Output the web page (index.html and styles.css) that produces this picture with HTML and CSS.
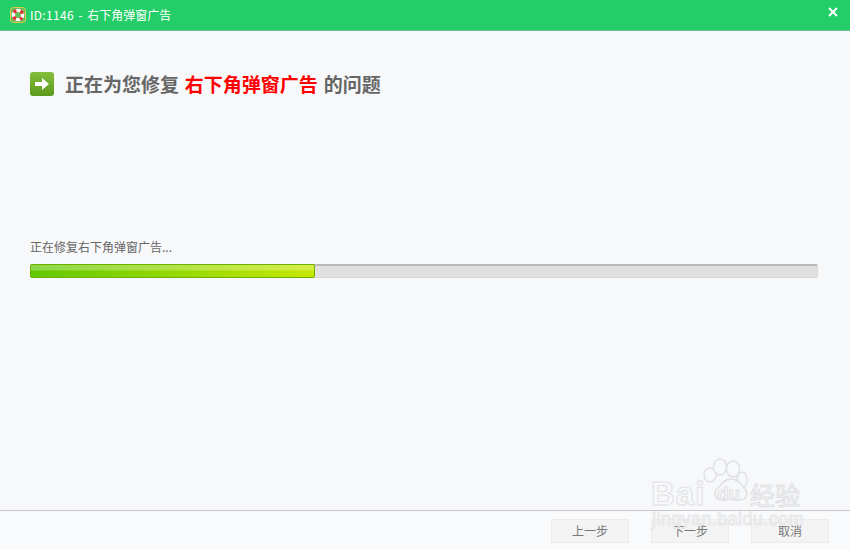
FILE: index.html
```html
<!DOCTYPE html>
<html lang="zh-CN">
<head>
  <meta charset="UTF-8">
  <title>ID:1146 - 右下角弹窗广告</title>
  <link rel="stylesheet" href="styles.css">
</head>
<body>
  <div class="title-bar">
    <svg class="app-icon" width="16" height="16" viewBox="0 0 16 16">
      <rect x="0.5" y="0.5" width="15" height="15" rx="3" fill="#5cc05c" stroke="#e6c548"/>
      <circle cx="8" cy="8" r="4.6" fill="none" stroke="#fff" stroke-width="3.4"/>
      <circle cx="8" cy="8" r="4.6" fill="none" stroke="#e0352b" stroke-width="3.4" stroke-dasharray="3.4 3.82" stroke-dashoffset="1.7" transform="rotate(45 8 8)"/>
    </svg>
    <div class="title-text"><span class="title-id">ID:1146 - </span>右下角弹窗广告</div>
    <svg class="close-icon" width="10" height="10" viewBox="0 0 10 10">
      <path d="M1 1l8 8M9 1l-8 8" stroke="#fff" stroke-width="2"/>
    </svg>
  </div>

  <div class="content">
    <div class="heading">
      <svg class="arrow-icon" width="24" height="24" viewBox="0 0 24 24">
        <defs>
          <linearGradient id="arrow-bg" x1="0" y1="0" x2="0" y2="1">
            <stop offset="0" stop-color="#84bd3c"/>
            <stop offset="1" stop-color="#5c9a1c"/>
          </linearGradient>
        </defs>
        <rect x="0" y="0" width="24" height="24" rx="3" fill="url(#arrow-bg)"/>
        <path d="M5 10h7V6l7 6-7 6v-4H5z" fill="#fff"/>
      </svg>
      <span class="heading-text">正在为您修复 <span class="hl">右下角弹窗广告</span> 的问题</span>
    </div>

    <div class="progress-label">正在修复右下角弹窗广告...</div>
    <div class="progress">
      <div class="progress-fill" style="width: 285px"></div>
    </div>
  </div>

  <div class="footer">
    <div class="btn">上一步</div>
    <div class="btn">下一步</div>
    <div class="btn">取消</div>
  </div>

  <div class="watermark">
    <svg class="paw" width="50" height="52" viewBox="0 0 50 52">
      <g fill="#f7f8fa" stroke="#e0e1e3" stroke-width="1.5">
        <ellipse cx="10" cy="17" rx="6" ry="7"/>
        <ellipse cx="20" cy="9" rx="6.5" ry="8"/>
        <ellipse cx="33" cy="11" rx="6.5" ry="8"/>
        <ellipse cx="42" cy="22" rx="5" ry="8"/>
        <path d="M31 21c7 0 11 6 14 10 4 5 1 11-6 11-3 0-5-1-8-1-3 0-6 2-10 1-6-1-8-7-4-11 4-4 7-10 14-10z"/>
      </g>
    </svg>
    <span class="wm-bai">Bai</span>
    <span class="wm-du">du</span>
    <span class="wm-cn">经验</span>
    <span class="wm-url">jingyan.baidu.com</span>
  </div>
</body>
</html>
```

FILE: styles.css
```css
html, body {
  margin: 0;
  padding: 0;
}

body {
  position: relative;
  width: 850px;
  height: 550px;
  overflow: hidden;
  display: flex;
  flex-direction: column;
  background: #f7f8fa;
  font-family: "Noto Sans CJK SC", "Open Sans", sans-serif;
  font-size: 12px;
  color: #666;
}

.title-bar {
  height: 30px;
  flex: none;
  display: flex;
  align-items: center;
  padding: 0 12px 0 10px;
  background: #23cd67;
  border-bottom: 1px solid #6cbf8e;
  color: #fff;
}

.app-icon {
  margin-right: 4px;
}

.title-text {
  flex: 1;
  line-height: 16px;
}

.title-id {
  letter-spacing: 0.3px;
  word-spacing: 1.5px;
}

.close-icon {
  margin-top: -6px;
}

.content {
  flex: 1;
  padding: 41px 32px 0 30px;
}

.heading {
  display: flex;
  align-items: center;
  height: 24px;
}

.arrow-icon {
  margin-right: 11px;
}

.heading-text {
  font-size: 19px;
  font-weight: bold;
  word-spacing: 1.5px;
  color: #666;
  line-height: 24px;
}

.hl {
  color: #f00;
}

.progress-label {
  margin-top: 142px;
  height: 18px;
  line-height: 18px;
  color: #666;
}

.progress {
  margin-top: 8px;
  height: 14px;
  box-sizing: border-box;
  background: #e0e0e0;
  border: 1px solid #d8d8d8;
  border-top: 2px solid #b9b9b9;
  border-radius: 2px;
}

.progress-fill {
  height: 14px;
  margin: -2px 0 0 -1px;
  box-sizing: border-box;
  border: 1px solid #6db000;
  border-radius: 2px;
  background: linear-gradient(to bottom, rgba(255,255,255,0.28) 0, rgba(255,255,255,0.28) 5px, rgba(255,255,255,0) 6px), linear-gradient(to right, #62c800, #c6e800);
}

.footer {
  height: 39px;
  flex: none;
  display: flex;
  justify-content: flex-end;
  align-items: flex-start;
  gap: 22px;
  padding-right: 21px;
  background: #f9fafb;
  border-top: 1px solid #c8c8ca;
}

.btn {
  width: 78px;
  height: 24px;
  margin-top: 8px;
  box-sizing: border-box;
  border: 1px solid #ececec;
  background: #f3f3f3;
  text-align: center;
  line-height: 22px;
  color: #777;
}

/* stock photo watermark lying over the bottom right corner */
.watermark {
  position: absolute;
  left: 650px;
  top: 458px;
  width: 160px;
  height: 92px;
  color: #f7f8fa;
  font-family: "Liberation Sans", sans-serif;
}

.paw {
  position: absolute;
  left: 50px;
  top: 0;
}

.wm-bai, .wm-du, .wm-cn, .wm-url {
  position: absolute;
  -webkit-text-stroke: 1px #e0e1e3;
}

.wm-bai {
  left: 1px;
  top: 15px;
  font-size: 33px;
  font-weight: bold;
  line-height: 42px;
  letter-spacing: 1px;
}

.wm-du {
  left: 67px;
  top: 24px;
  font-size: 19px;
  font-weight: bold;
  line-height: 24px;
}

.wm-cn {
  left: 100px;
  top: 18px;
  font-family: "Noto Sans CJK SC", sans-serif;
  font-size: 25px;
  line-height: 36px;
}

.wm-url {
  left: 2px;
  top: 52px;
  font-size: 18px;
  line-height: 18px;
  letter-spacing: 0.4px;
  color: transparent;
  -webkit-text-stroke: 1px #e6e7e9;
}
```
